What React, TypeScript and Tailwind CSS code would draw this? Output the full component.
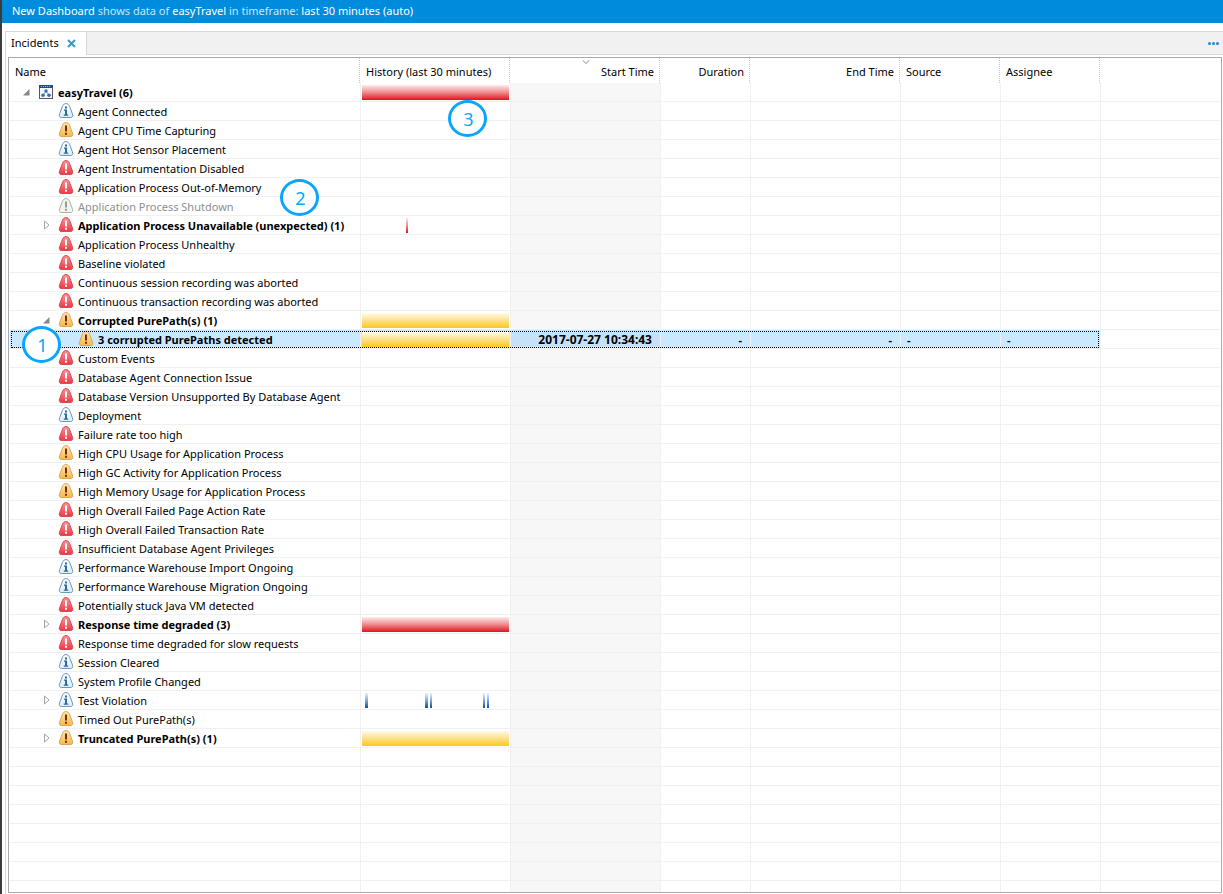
import { clsx } from "clsx";

type Severity = "info" | "warning" | "severe" | "disabled" | "profile";
type Tone = "red" | "yellow" | "blue";

type Incident = {
  name: string;
  severity: Severity;
  level?: 0 | 2;
  bold?: boolean;
  expander?: "open" | "closed";
  selected?: boolean;
  tone?: Tone;
  // [offset, width] on the 147px wide timeline
  history?: [number, number][];
  start?: string;
};

const FULL: [number, number][] = [[0, 147]];

const incidents: Incident[] = [
  { name: "easyTravel (6)", severity: "profile", level: 0, bold: true, expander: "open", tone: "red", history: FULL },
  { name: "Agent Connected", severity: "info" },
  { name: "Agent CPU Time Capturing", severity: "warning" },
  { name: "Agent Hot Sensor Placement", severity: "info" },
  { name: "Agent Instrumentation Disabled", severity: "severe" },
  { name: "Application Process Out-of-Memory", severity: "severe" },
  { name: "Application Process Shutdown", severity: "disabled" },
  {
    name: "Application Process Unavailable (unexpected) (1)",
    severity: "severe",
    bold: true,
    expander: "closed",
    tone: "red",
    history: [[44, 2]],
  },
  { name: "Application Process Unhealthy", severity: "severe" },
  { name: "Baseline violated", severity: "severe" },
  { name: "Continuous session recording was aborted", severity: "severe" },
  { name: "Continuous transaction recording was aborted", severity: "severe" },
  { name: "Corrupted PurePath(s) (1)", severity: "warning", bold: true, expander: "open", tone: "yellow", history: FULL },
  {
    name: "3 corrupted PurePaths detected",
    severity: "warning",
    level: 2,
    bold: true,
    selected: true,
    tone: "yellow",
    history: FULL,
    start: "2017-07-27 10:34:43",
  },
  { name: "Custom Events", severity: "severe" },
  { name: "Database Agent Connection Issue", severity: "severe" },
  { name: "Database Version Unsupported By Database Agent", severity: "severe" },
  { name: "Deployment", severity: "info" },
  { name: "Failure rate too high", severity: "severe" },
  { name: "High CPU Usage for Application Process", severity: "warning" },
  { name: "High GC Activity for Application Process", severity: "warning" },
  { name: "High Memory Usage for Application Process", severity: "warning" },
  { name: "High Overall Failed Page Action Rate", severity: "severe" },
  { name: "High Overall Failed Transaction Rate", severity: "severe" },
  { name: "Insufficient Database Agent Privileges", severity: "severe" },
  { name: "Performance Warehouse Import Ongoing", severity: "info" },
  { name: "Performance Warehouse Migration Ongoing", severity: "info" },
  { name: "Potentially stuck Java VM detected", severity: "severe" },
  { name: "Response time degraded (3)", severity: "severe", bold: true, expander: "closed", tone: "red", history: FULL },
  { name: "Response time degraded for slow requests", severity: "severe" },
  { name: "Session Cleared", severity: "info" },
  { name: "System Profile Changed", severity: "info" },
  {
    name: "Test Violation",
    severity: "info",
    expander: "closed",
    tone: "blue",
    history: [
      [3, 3],
      [63, 3],
      [68, 2],
      [121, 2],
      [125, 2],
    ],
  },
  { name: "Timed Out PurePath(s)", severity: "warning" },
  { name: "Truncated PurePath(s) (1)", severity: "warning", bold: true, expander: "closed", tone: "yellow", history: FULL },
];

const EMPTY_ROWS = 7;

const palette = {
  info: { fill: "url(#fill-info)", stroke: "#6b97ba", mark: "#2a6aa0" },
  warning: { fill: "url(#fill-warning)", stroke: "#dba45a", mark: "#7a2a10" },
  severe: { fill: "url(#fill-severe)", stroke: "#e04650", mark: "#ffffff" },
  disabled: { fill: "#f1f4ef", stroke: "#a5b3a3", mark: "#8fa08d" },
};

const gradients: [string, string[]][] = [
  ["fill-info", ["#ffffff", "#dcebf6"]],
  ["fill-warning", ["#ffe9b8", "#fbb63f"]],
  ["fill-severe", ["#f79a9e", "#ea3642"]],
  ["bar-red", ["#fdecec", "#f08a8c", "#e0141e"]],
  ["bar-yellow", ["#fffbe6", "#fde08a", "#fcc917"]],
  ["bar-blue", ["#e8f4fc", "#7fa8dc", "#0a4f9c"]],
];

function Gradients() {
  return (
    <svg className="absolute h-0 w-0" aria-hidden="true">
      <defs>
        {gradients.map(([id, stops]) => (
          <linearGradient key={id} id={id} x1="0" y1="0" x2="0" y2="15" gradientUnits="userSpaceOnUse">
            {stops.map((color, i) => (
              <stop key={color} offset={i / (stops.length - 1)} stopColor={color} />
            ))}
          </linearGradient>
        ))}
      </defs>
    </svg>
  );
}

function SeverityIcon({ severity }: { severity: Severity }) {
  if (severity === "profile") {
    return (
      <svg className="h-4 w-4 shrink-0" viewBox="0 0 16 16" aria-hidden="true">
        <rect x="1.5" y="1.5" width="13" height="13" fill="#f4f8fc" stroke="#5a5560" />
        <path d="M1 1h14v3H1z" fill="#1d4f88" />
        <path d="M3 2.5h10" stroke="#8db8e0" strokeDasharray="1 1" />
        <path d="M8 7l-3 4.500M8 7l3 4.500" stroke="#8aa9c8" />
        <circle cx="8" cy="7" r="1.700" fill="#3a6ea6" />
        <circle cx="5" cy="11.200" r="1.800" fill="#3a6ea6" />
        <circle cx="11" cy="11.200" r="1.800" fill="#3a6ea6" />
      </svg>
    );
  }

  const { fill, stroke, mark } = palette[severity];
  return (
    <svg className="h-4 w-4 shrink-0" viewBox="0 0 16 16" aria-hidden="true">
      <path
        d="M8 .6c1.800 0 2.900 1 3.500 2.600l2.900 7.600c.8 2.200.2 3.600-1.700 3.700H3.300c-1.900-.1-2.500-1.500-1.700-3.700l2.900-7.600C5.100 1.600 6.200.6 8 .6z"
        fill={fill}
        stroke={stroke}
      />
      {severity === "info" ? (
        <path d="M7 3.500h2v2H7zM6 6.500h3v5h1.200v1.200H5.800v-1.200H7V7.700H6z" fill={mark} />
      ) : (
        <path d="M7 3.500h2v6H7zM7 10.700h2v2H7z" fill={mark} />
      )}
    </svg>
  );
}

function Expander({ state, name }: { state?: "open" | "closed"; name: string }) {
  if (!state) return <span className="w-4 shrink-0" />;
  return (
    <button type="button" aria-label={`Toggle ${name}`} aria-expanded={state === "open"} className="w-4 shrink-0">
      <svg className="h-3 w-2" viewBox="0 0 8 12" aria-hidden="true">
        {state === "open" ? (
          <path d="M7.500 3v6.500H1z" fill="#8b8683" />
        ) : (
          <path d="M2.500 2v8l4.500-4z" fill="#fff" stroke="#a5a5a9" />
        )}
      </svg>
    </button>
  );
}

const toneFill = {
  red: "url(#bar-red)",
  yellow: "url(#bar-yellow)",
  blue: "url(#bar-blue)",
};

function History({ tone, spans }: { tone: Tone; spans: [number, number][] }) {
  return (
    <svg className="mt-0.5 mb-px ml-px block h-[15px] w-[147px]" viewBox="0 0 147 15" role="img" aria-label="History">
      {spans.map(([x, width]) => (
        <rect key={x} x={x} y="0" width={width} height="15" fill={toneFill[tone]} />
      ))}
    </svg>
  );
}

const cell = "border-r border-b border-[#f0f0f0] p-0";
const textCell = "border-r border-b border-[#f0f0f0] pt-0.5 pb-0 leading-4";

function IncidentRow({ item }: { item: Incident }) {
  const level = item.level ?? 1;
  const dash = item.selected ? "-" : "";
  return (
    <tr className={clsx("relative h-[19px]", item.bold && "font-bold")}>
      <td className={clsx(cell, item.selected && "bg-[#cce8ff]")}>
        <div
          className={clsx(
            "flex h-[18px] items-center whitespace-nowrap",
            level === 0 && "pl-3",
            level === 1 && "pl-8",
            level === 2 && "pl-[52px]",
            item.severity === "disabled" && "text-[#8e8e8e]",
          )}
        >
          <Expander state={item.expander} name={item.name} />
          <SeverityIcon severity={item.severity} />
          <span className="pt-0.5 pl-1 leading-4">{item.name}</span>
        </div>
        {item.selected && (
          <span className="absolute top-px left-px h-[17px] w-[1088px] border border-dotted border-black" />
        )}
      </td>
      <td className={clsx(cell, item.selected && "bg-[#cce8ff]")}>
        {item.tone && item.history && <History tone={item.tone} spans={item.history} />}
      </td>
      <td className={clsx(textCell, "pr-2 text-right text-xs/4", item.selected ? "bg-[#c7e1f8]" : "bg-[#f7f7f7]")}>
        {item.start}
      </td>
      <td className={clsx(textCell, "pr-2 text-right", item.selected && "bg-[#cce8ff]")}>{dash}</td>
      <td className={clsx(textCell, "pr-2 text-right", item.selected && "bg-[#cce8ff]")}>{dash}</td>
      <td className={clsx(textCell, "pl-1.5", item.selected && "bg-[#cce8ff]")}>{dash}</td>
      <td className={clsx(textCell, "pl-1.5", item.selected && "bg-[#cce8ff]")}>{dash}</td>
      <td className="border-b border-[#f0f0f0] p-0" />
    </tr>
  );
}

function EmptyRow({ last }: { last?: boolean }) {
  const line = last ? "border-r border-[#f0f0f0] p-0" : cell;
  return (
    <tr className={last ? "h-[11px]" : "h-[19px]"}>
      <td className={line} />
      <td className={line} />
      <td className={clsx(line, "bg-[#f7f7f7]")} />
      <td className={line} />
      <td className={line} />
      <td className={line} />
      <td className={line} />
      <td className={last ? "p-0" : "border-b border-[#f0f0f0] p-0"} />
    </tr>
  );
}

const columns = [
  { title: "Name", width: "w-[351px]" },
  { title: "History (last 30 minutes)", width: "w-[150px]" },
  { title: "Start Time", width: "w-[150px]", right: true, sorted: true },
  { title: "Duration", width: "w-[90px]", right: true },
  { title: "End Time", width: "w-[150px]", right: true },
  { title: "Source", width: "w-[100px]" },
  { title: "Assignee", width: "w-[100px]" },
];

function IncidentTable() {
  return (
    <table className="w-full table-fixed border-separate border-spacing-0">
      <thead>
        <tr className="h-[25px]">
          {columns.map((col) => (
            <th key={col.title} scope="col" className={clsx("relative p-0 font-normal", col.width)}>
              <div
                className={clsx(
                  "mr-px h-[25px] border-r border-dotted border-[#c8c8c8] pt-1 leading-[19px] whitespace-nowrap",
                  col.right ? "pr-[5px] text-right" : "pl-[5px] text-left",
                )}
              >
                {col.title}
              </div>
              {col.sorted && (
                <svg className="absolute top-0.5 left-[71px] h-1 w-2" viewBox="0 0 8 4" aria-hidden="true">
                  <path d="M.7.3L4 3.500 7.300.3" fill="none" stroke="#8a8a8a" />
                </svg>
              )}
            </th>
          ))}
          <td className="p-0" />
        </tr>
      </thead>
      <tbody>
        {incidents.map((item) => (
          <IncidentRow key={item.name} item={item} />
        ))}
        {Array.from({ length: EMPTY_ROWS }, (_, i) => (
          <EmptyRow key={i} />
        ))}
        <EmptyRow last />
      </tbody>
    </table>
  );
}

function Callout({ label, className }: { label: string; className: string }) {
  return (
    <span
      className={clsx(
        "absolute flex h-[37px] w-[39px] items-center justify-center rounded-[50%] border-3 border-[#0aa5ff] bg-white pl-0.5 text-lg font-normal text-[#0aa5ff]",
        className,
      )}
    >
      {label}
    </span>
  );
}

export default function App() {
  return (
    <div className="relative flex min-h-screen flex-col border-l-2 border-[#3c3c3c] bg-white font-['Noto_Sans','Open_Sans',sans-serif] text-[11px] leading-[18px] text-black">
      <Gradients />
      <header className="h-[23px] bg-[#008cdc] pl-2.5 leading-[22px] text-[#c6e7fb]">
        <span className="text-white">New Dashboard</span> shows data of <span className="text-white">easyTravel</span> in
        timeframe: <span className="text-white">last 30 minutes (auto)</span>
      </header>

      <main className="mt-2 ml-[3px] flex flex-1 flex-col border-t border-l border-[#d3d8dc]">
        <div className="flex h-[23px] bg-[#f1f1f1]">
          <div className="flex w-[81px] items-center justify-between border-r border-[#d3d8dc] bg-white pr-2.5 pl-[5px]">
            <span className="pb-0.5">Incidents</span>
            <button type="button" aria-label="Close Incidents">
              <svg className="block h-[9px] w-[9px]" viewBox="0 0 9 9" aria-hidden="true">
                <path d="M1 1l7 7M8 1L1 8" stroke="#3b97c6" strokeWidth="2" />
              </svg>
            </button>
          </div>
          <div className="flex flex-1 items-center justify-end border-b border-[#d3d8dc] pr-1">
            <button type="button" aria-label="More options">
              <svg className="block h-[3px] w-[11px]" viewBox="0 0 11 3" aria-hidden="true">
                <circle cx="1.500" cy="1.500" r="1.500" fill="#1a8ad0" />
                <circle cx="5.500" cy="1.500" r="1.500" fill="#1a8ad0" />
                <circle cx="9.500" cy="1.500" r="1.500" fill="#1a8ad0" />
              </svg>
            </button>
          </div>
        </div>
        <div className="mt-0.5 mr-px mb-px ml-0.5 flex-1 border border-[#a8a9ae] px-px">
          <IncidentTable />
        </div>
      </main>

      <Callout label="1" className="top-[326px] left-5" />
      <Callout label="2" className="top-[179px] left-[278px]" />
      <Callout label="3" className="top-[100px] left-[446px]" />
    </div>
  );
}
